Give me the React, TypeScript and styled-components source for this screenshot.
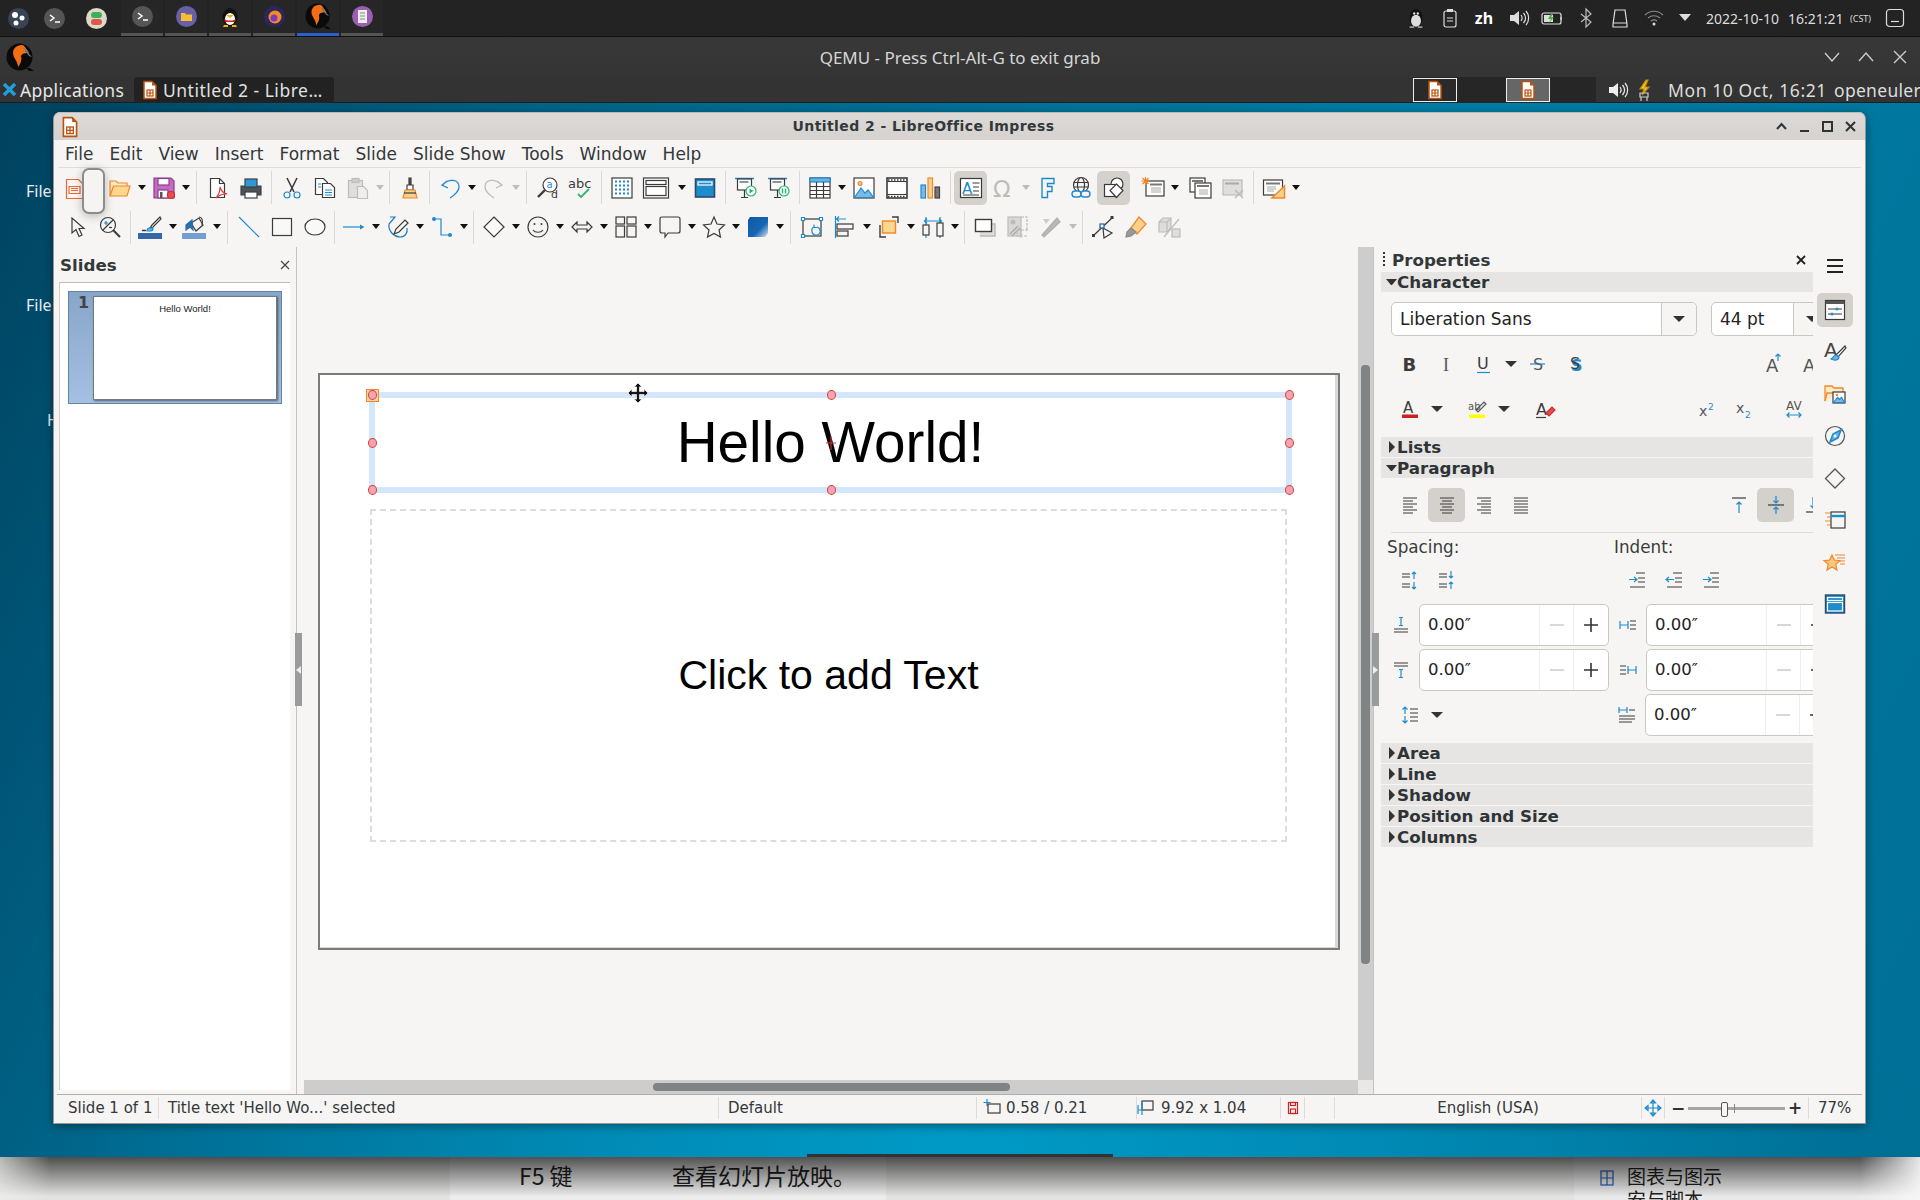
import React from 'react'
import styled, { createGlobalStyle } from 'styled-components'

const GlobalStyle = createGlobalStyle`
  html, body { margin: 0; padding: 0; background: #222; }
  * { box-sizing: border-box; }
`

const DK = '#3b3b3b'
const BL = '#1e8bcd'
const OR = '#f0882a'
const GR = '#bcbcba'

const Screen = styled.div`
  position: relative;
  width: 1920px;
  height: 1200px;
  overflow: hidden;
  display: flex;
  flex-direction: column;
  font-family: 'DejaVu Sans', sans-serif;
  color: #2e3436;
`

/* ---------- host top bar ---------- */
const HostBar = styled.div`
  height: 37px;
  flex: none;
  display: flex;
  align-items: flex-start;
  background: #232323;
  border-bottom: 1px solid #111;
  color: #ddd;
  font-family: 'Noto Sans', sans-serif;
  font-size: 14px;
`
const Launcher = styled.div<{ $w: number }>`
  width: ${(p) => p.$w}px;
  height: 36px;
  flex: none;
  display: flex;
  align-items: center;
  justify-content: center;
`
const Task = styled.div<{ $on?: boolean }>`
  width: 42px;
  height: 36px;
  flex: none;
  margin-right: 2px;
  display: flex;
  align-items: center;
  justify-content: center;
  padding-bottom: 1px;
  background: #262626;
  border-bottom: 3px solid ${(p) => (p.$on ? '#2a5fd0' : '#555')};
`
const HostTray = styled.div`
  margin-left: auto;
  height: 36px;
  display: flex;
  align-items: center;
`
const TraySlot = styled.div<{ $w: number }>`
  width: ${(p) => p.$w}px;
  display: flex;
  justify-content: center;
  font-weight: 700;
  font-size: 16px;
  color: #fff;
`
const HostDate = styled.span`
  margin-left: 7px;
  width: 82px;
`
const HostTime = styled.span`
  width: 62px;
`
const HostZone = styled.span`
  font-size: 9px;
  width: 33px;
`

/* ---------- qemu chrome ---------- */
const Qemu = styled.div`
  height: 66px;
  flex: none;
  background: #333;
  border-radius: 4px 4px 0 0;
  border-bottom: 1px solid #1c1c1c;
  color: #ddd;
  font-family: 'Noto Sans', sans-serif;
  display: flex;
  flex-direction: column;
`
const QemuTitleRow = styled.div`
  height: 40px;
  flex: none;
  display: flex;
  align-items: center;
  position: relative;
  padding-left: 6px;
  background: linear-gradient(#383838, #343434);
`
const QemuTitle = styled.div`
  position: absolute;
  left: 0;
  right: 0;
  text-align: center;
  font-size: 17px;
  color: #d6d6d6;
`
const QemuControls = styled.div`
  margin-left: auto;
  display: flex;
  gap: 14px;
  padding-right: 10px;
`
const PanelRow = styled.div`
  height: 25px;
  flex: none;
  display: flex;
  align-items: center;
  font-size: 17.5px;
`
const PanelApps = styled.div`
  width: 134px;
  flex: none;
  height: 25px;
  display: flex;
  align-items: center;
  gap: 3px;
  padding-left: 2px;
  color: #e6e6e6;
  white-space: nowrap;
  letter-spacing: 0.3px;
`
const PanelTask = styled.div`
  width: 200px;
  height: 26px;
  flex: none;
  margin-top: 1px;
  background: #222;
  border-radius: 4px;
  display: flex;
  align-items: center;
  gap: 3px;
  padding-left: 6px;
  color: #e0e0e0;
  letter-spacing: 0.5px;
  white-space: nowrap;
`
const Pager = styled.div`
  margin-left: auto;
  width: 183px;
  height: 26px;
  margin-right: 10px;
  margin-top: 1px;
  background: #262626;
  display: flex;
  gap: 49px;
  align-items: center;
`
const PagerCell = styled.div<{ $on?: boolean }>`
  width: 44px;
  height: 24px;
  border: 1px solid #eee;
  background: ${(p) => (p.$on ? '#666' : '#2a2a2a')};
  display: flex;
  align-items: center;
  justify-content: center;
`
const PanelClock = styled.span`
  margin-left: 13px;
  width: 166px;
  white-space: nowrap;
  letter-spacing: 0.6px;
`
const PanelUser = styled.span`
  width: 86px;
  white-space: nowrap;
  overflow: hidden;
  letter-spacing: 0.3px;
`

/* ---------- desktop ---------- */
const Desktop = styled.div`
  height: 1054px;
  flex: none;
  position: relative;
  padding: 9px 0 0 53px;
  background: radial-gradient(ellipse 900px 500px at 50% 100%, #0099c6 0%, rgba(0, 153, 198, 0) 100%),
    linear-gradient(115deg, #00425f 0%, #00678c 25%, #007ea6 60%, #006f96 100%);
`
const DesktopLabel = styled.div<{ $top: number; $left: number }>`
  position: absolute;
  left: ${(p) => p.$left}px;
  top: ${(p) => p.$top}px;
  color: #e8eef2;
  font-family: 'Noto Sans', sans-serif;
  font-size: 16px;
`
const Window = styled.div`
  position: relative;
  width: 1813px;
  height: 1012px;
  display: flex;
  flex-direction: column;
  background: #f6f5f3;
  border-radius: 7px 7px 0 0;
  box-shadow: 0 2px 10px rgba(0, 0, 0, 0.4);
  border: 1px solid #9a9896;
  border-top: 0;
`
const TitleBar = styled.div`
  height: 28px;
  flex: none;
  display: flex;
  align-items: center;
  position: relative;
  padding-left: 5px;
  border-radius: 7px 7px 0 0;
  background: linear-gradient(#dcd9d6, #d5d2cf);
  border-top: 1px solid #bbb;
`
const TitleText = styled.div`
  position: absolute;
  left: 0;
  right: 0;
  text-align: center;
  padding: 0 72px 2px 0;
  font-size: 14px;
  font-weight: 700;
  color: #33383a;
  letter-spacing: 0.42px;
`
const WinControls = styled.div`
  margin-left: auto;
  display: flex;
  gap: 8px;
  padding-right: 7px;
`
const MenuBar = styled.div`
  height: 28px;
  flex: none;
  display: flex;
  align-items: center;
  gap: 16px;
  padding-left: 7px;
  font-size: 17px;
  color: #33383a;
  border-bottom: 1px solid #dddcda;
  margin: 0 4px;
`
const ToolRow = styled.div<{ $h: number; $left: number }>`
  height: ${(p) => p.$h}px;
  flex: none;
  display: flex;
  align-items: center;
  padding-left: ${(p) => p.$left}px;
`
const ToolBtn = styled.div<{ $on?: boolean; $w?: number }>`
  width: ${(p) => p.$w ?? 33}px;
  height: 34px;
  flex: none;
  display: flex;
  align-items: center;
  justify-content: center;
  border-radius: 5px;
  background: ${(p) => (p.$on ? '#d4d0cc' : 'transparent')};
`
const Caret = styled.div<{ $off?: boolean }>`
  width: 11px;
  height: 6px;
  flex: none;
  display: flex;
  justify-content: center;
  &::after {
    content: '';
    border-left: 4px solid transparent;
    border-right: 4px solid transparent;
    border-top: 5px solid ${(p) => (p.$off ? '#bdbdbb' : '#111')};
  }
`
const Sep = styled.div<{ $w: number }>`
  width: ${(p) => p.$w}px;
  height: 33px;
  flex: none;
  display: flex;
  justify-content: center;
  &::after {
    content: '';
    width: 1px;
    background: #dad9d7;
  }
`
const Gap = styled.div<{ $w?: number; $h?: number }>`
  width: ${(p) => p.$w ?? 0}px;
  height: ${(p) => (p.$h ? `${p.$h}px` : 'auto')};
  flex: none;
`
const Popover = styled.div`
  position: absolute;
  left: 28px;
  top: 56px;
  width: 23px;
  height: 46px;
  background: #f5f4f2;
  border: 2px solid #8c8c8c;
  border-radius: 7px;
  box-shadow: 0 2px 10px rgba(0, 0, 0, 0.25);
`

/* ---------- main area ---------- */
const Main = styled.div`
  height: 847px;
  flex: none;
  display: flex;
`
const SlidesPane = styled.div`
  width: 243px;
  flex: none;
  display: flex;
  flex-direction: column;
  border-right: 1px solid #c4c3c1;
`
const PaneHead = styled.div`
  height: 35px;
  flex: none;
  display: flex;
  align-items: center;
  justify-content: space-between;
  padding: 0 4px 0 6px;
  font-size: 16.7px;
  font-weight: 700;
  color: #33383a;
`
const SlideList = styled.div`
  flex: 1;
  margin: 0 6px 4px 5px;
  padding: 8px 8px;
  background: #fff;
  border-top: 1px solid #bbb;
  border-left: 1px solid #ccc;
`
const Thumb = styled.div`
  width: 214px;
  height: 113px;
  display: flex;
  padding: 4px 4px 4px 24px;
  position: relative;
  border: 1px solid #66839f;
  background: linear-gradient(#87a6c9, #a4c0e2);
`
const ThumbNo = styled.span`
  position: absolute;
  left: 9px;
  top: 1px;
  font-size: 16px;
  font-weight: 700;
  color: #444;
`
const ThumbPage = styled.div`
  width: 185px;
  height: 104px;
  background: #fff;
  border: 1px solid #777;
  box-shadow: 1px 1px 2px rgba(0, 0, 0, 0.5);
  text-align: center;
  font-family: 'Liberation Sans', sans-serif;
  font-size: 9.5px;
  padding-top: 6px;
  color: #222;
`
const Editor = styled.div`
  width: 1076px;
  flex: none;
  display: flex;
  flex-direction: column;
  position: relative;
`
const EditorRow = styled.div`
  flex: 1;
  display: flex;
`
const Workspace = styled.div`
  width: 1061px;
  flex: none;
  padding: 126px 0 0 21px;
`
const Slide = styled.div`
  position: relative;
  width: 1022px;
  height: 577px;
  background: #fff;
  border: 2px solid #7c7c7c;
  box-shadow: inset -3px -1px 0 #d8d8d8;
  font-family: 'Liberation Sans', sans-serif;
  color: #000;
`
const TitleFrame = styled.div`
  position: absolute;
  left: 49px;
  top: 17px;
  width: 923px;
  height: 101px;
  border: 6px solid #d4e6fb;
  display: flex;
  align-items: center;
  justify-content: center;
  font-size: 56.7px;
`
const Outline = styled.div`
  position: absolute;
  left: 50px;
  top: 134px;
  width: 917px;
  height: 333px;
  border: 2px dashed #dcdcdc;
  display: flex;
  align-items: center;
  justify-content: center;
  font-size: 41px;
`
const Handle = styled.div<{ $x: number; $y: number }>`
  position: absolute;
  left: ${(p) => p.$x - 4.5}px;
  top: ${(p) => p.$y - 5}px;
  width: 9px;
  height: 10px;
  border-radius: 50%;
  background: #f0a6b0;
  border: 1px solid #e03b3b;
`
const CornerMark = styled.div`
  position: absolute;
  left: 46px;
  top: 14px;
  width: 13px;
  height: 13px;
  background: #fbd5a5;
  border: 1px solid ${OR};
`
const Overlay = styled.svg<{ $x: number; $y: number }>`
  position: absolute;
  left: ${(p) => p.$x}px;
  top: ${(p) => p.$y}px;
`
const VScroll = styled.div`
  width: 15px;
  flex: none;
  background: #cdcdcd;
  padding: 118px 3px 0;
`
const VThumb = styled.div`
  height: 599px;
  border-radius: 4px;
  background: #7f8383;
`
const HScrollRow = styled.div`
  height: 14px;
  flex: none;
  display: flex;
  padding-left: 7px;
`
const HTrack = styled.div`
  width: 1054px;
  flex: none;
  background: #cdcdcd;
  padding: 3px 0 0 349px;
`
const HThumb = styled.div`
  width: 357px;
  height: 8px;
  border-radius: 4px;
  background: #7f8383;
`
const HCorner = styled.div`
  flex: 1;
  background: #e9e8e6;
`
const Grip = styled.div<{ $x: number; $left?: boolean }>`
  position: absolute;
  left: ${(p) => p.$x}px;
  top: 386px;
  width: 7px;
  height: 73px;
  background: #9a9c9c;
  display: flex;
  align-items: center;
  justify-content: center;
  &::after {
    content: '';
    border-top: 4px solid transparent;
    border-bottom: 4px solid transparent;
    ${(p) => (p.$left ? 'border-right: 5px solid #eee;' : 'border-left: 5px solid #eee;')}
  }
`

/* ---------- right deck ---------- */
const Deck = styled.div`
  flex: 1;
  display: flex;
  border-left: 1px solid #c4c3c1;
`
const Panel = styled.div`
  width: 439px;
  flex: none;
  overflow: hidden;
  padding-left: 7px;
`
const PanelHead = styled.div`
  height: 25px;
  display: flex;
  align-items: center;
  gap: 5px;
  font-size: 16.7px;
  font-weight: 700;
  color: #33383a;
`
const PanelClose = styled.span`
  margin-left: auto;
  margin-right: 5px;
  display: flex;
`
const SectionHead = styled.div`
  height: 20px;
  margin-bottom: 1px;
  background: #e6e5e3;
  display: flex;
  align-items: center;
  padding-left: 5px;
  font-size: 16.7px;
  font-weight: 700;
  color: #2e3436;
  white-space: nowrap;
`
const ArrowDown = styled.i`
  width: 11px;
  border-left: 5.5px solid transparent;
  border-right: 5.5px solid transparent;
  border-top: 6px solid #2e3436;
`
const ArrowRight = styled.i`
  margin-left: 3px;
  margin-right: 2px;
  width: 6px;
  border-top: 6px solid transparent;
  border-bottom: 6px solid transparent;
  border-left: 6px solid #2e3436;
`
const Combo = styled.div<{ $w: number; $btn: number }>`
  width: ${(p) => p.$w}px;
  height: 34px;
  flex: none;
  display: flex;
  background: #fff;
  border: 1px solid #cbc7c2;
  border-radius: 5px;
  font-size: 17px;
  color: #222;
  & > span {
    flex: 1;
    padding-left: 8px;
    line-height: 32px;
  }
  & > b {
    width: ${(p) => p.$btn}px;
    display: flex;
    align-items: center;
    justify-content: center;
    background: #f6f5f3;
    border-left: 1px solid #cbc7c2;
    border-radius: 0 5px 5px 0;
  }
`
const ComboRow = styled.div`
  margin: 10px 0 0 10px;
  display: flex;
  gap: 14px;
  width: 500px;
`
const PRow = styled.div<{ $h?: number; $top?: number; $bottom?: number; $left?: number }>`
  display: flex;
  align-items: center;
  height: ${(p) => p.$h ?? 36}px;
  margin-top: ${(p) => p.$top ?? 0}px;
  margin-bottom: ${(p) => p.$bottom ?? 0}px;
  padding-left: ${(p) => p.$left ?? 10}px;
  width: 600px;
`
const PBtn = styled.div<{ $on?: boolean; $w?: number }>`
  width: ${(p) => p.$w ?? 37}px;
  height: 34px;
  flex: none;
  display: flex;
  align-items: center;
  justify-content: center;
  border-radius: 5px;
  background: ${(p) => (p.$on ? '#d4d0cc' : 'transparent')};
`
const PCaret = styled.div`
  width: 18px;
  flex: none;
  display: flex;
  justify-content: center;
  &::after {
    content: '';
    border-left: 6px solid transparent;
    border-right: 6px solid transparent;
    border-top: 6px solid #333;
  }
`
const Divider = styled.div`
  height: 1px;
  margin: 10px 0 0 10px;
  background: #dcdbd9;
`
const LabelRow = styled.div`
  height: 28px;
  display: flex;
  align-items: center;
  font-size: 16.8px;
  color: #3a3d3e;
`
const FieldLabel = styled.span<{ $w: number; $left: number }>`
  width: ${(p) => p.$w}px;
  padding-left: ${(p) => p.$left}px;
`
const Spin = styled.div`
  width: 190px;
  height: 42px;
  flex: none;
  display: flex;
  background: #fff;
  border: 1px solid #cbc7c2;
  border-radius: 5px;
  font-size: 16.5px;
  color: #222;
`
const SpinValue = styled.div`
  width: 119px;
  padding-left: 8px;
  line-height: 40px;
`
const SpinBtn = styled.div<{ $w: number; $off?: boolean }>`
  width: ${(p) => p.$w}px;
  border-left: 1px solid #eee;
  display: flex;
  align-items: center;
  justify-content: center;
  color: ${(p) => (p.$off ? '#d8d8d6' : '#333')};
`
const SpinGrid = styled.div`
  margin-top: 7px;
  display: flex;
  flex-direction: column;
  gap: 3px;
  width: 600px;
  margin-bottom: 7px;
`
const TabBar = styled.div`
  flex: 1;
  display: flex;
  flex-direction: column;
  align-items: center;
  padding: 8px 8px 0 0;
`
const Tab = styled.div<{ $on?: boolean }>`
  width: 36px;
  height: 34px;
  margin-bottom: 8px;
  display: flex;
  align-items: center;
  justify-content: center;
  border-radius: 5px;
  background: ${(p) => (p.$on ? '#d4d0cc' : 'transparent')};
`

/* ---------- status bar ---------- */
const StatusBar = styled.div`
  height: 30px;
  flex: none;
  margin: 0 3px;
  padding-bottom: 3px;
  display: flex;
  align-items: center;
  font-size: 15px;
  color: #33383a;
  border-top: 1px solid #b0afad;
`
const Cell = styled.div<{ $w: number; $center?: boolean; $pad?: number; $last?: boolean }>`
  width: ${(p) => p.$w}px;
  height: 22px;
  flex: none;
  display: flex;
  align-items: center;
  gap: 4px;
  white-space: nowrap;
  justify-content: ${(p) => (p.$center ? 'center' : 'flex-start')};
  padding-left: ${(p) => p.$pad ?? 0}px;
  border-right: ${(p) => (p.$last ? '0' : '1px solid #dddcda')};
`
const Zoomer = styled.div`
  width: 144px;
  height: 22px;
  flex: none;
  display: flex;
  align-items: center;
  padding: 0 6px;
  gap: 3px;
  border-right: 1px solid #dddcda;
`
const ZoomSign = styled.span`
  width: 14px;
  font-size: 17px;
  font-weight: 700;
  text-align: center;
  color: #333;
`
const ZoomTrack = styled.div`
  flex: 1;
  height: 3px;
  background: #a5a5a5;
  position: relative;
  &::before {
    content: '';
    position: absolute;
    left: 33px;
    top: -5px;
    width: 5px;
    height: 13px;
    background: #f6f5f3;
    border: 1px solid #555;
    border-radius: 2px;
  }
  &::after {
    content: '';
    position: absolute;
    left: 46px;
    top: -3px;
    width: 1px;
    height: 9px;
    background: #888;
  }
`

/* ---------- what lies behind the vm window ---------- */
const Behind = styled.div`
  height: 43px;
  flex: none;
  position: relative;
  display: flex;
  background: #f1f1f0;
  font-family: 'Noto Sans CJK SC', sans-serif;
  color: #222;
  font-size: 23px;
  &::after {
    content: '';
    position: absolute;
    inset: 0;
    background: linear-gradient(rgba(0, 0, 0, 0.68), rgba(0, 0, 0, 0.06) 92%);
    mask-image: linear-gradient(90deg, rgba(0, 0, 0, 0.35) 0, #000 50px, #000 1860px, rgba(0, 0, 0, 0.1) 1920px);
    pointer-events: none;
  }
`
const BehindDoc = styled.div`
  margin-left: 450px;
  width: 436px;
  flex: none;
  padding: 3px 0 0 69px;
  display: flex;
  background: #fbfbfb;
  line-height: 30px;
`
const BehindKey = styled.span`
  width: 153px;
  flex: none;
`
const BehindNav = styled.div`
  margin-left: 688px;
  flex: 1;
  padding: 7px 0 0 25px;
  background: #f8f8f8;
  font-size: 19px;
  line-height: 23px;
  display: flex;
  gap: 12px;
`
const NavIcon = styled.div`
  padding-top: 5px;
`
const NavLine = styled.div`
  display: flex;
  flex-direction: column;
`
const WindowEdge = styled.div`
  position: absolute;
  left: 807px;
  top: 1154px;
  width: 306px;
  height: 3px;
  background: #333;
`

/* ---------- drawings ---------- */
const Ico = styled.svg`
  fill: none;
  stroke-width: 1.2;
  flex: none;
  display: block;
  overflow: visible;
`
const SvgText = styled.text<{ $size: number; $weight?: number; $font?: string }>`
  font-family: ${(p) => p.$font ?? "'DejaVu Sans'"}, sans-serif;
  font-size: ${(p) => p.$size}px;
  font-weight: ${(p) => p.$weight ?? 400};
  stroke: none;
`

const I = ({ s = 22, v = 22, children }: { s?: number; v?: number; children: React.ReactNode }) => (
  <Ico width={s} height={s} viewBox={`0 0 ${v} ${v}`}>
    {children}
  </Ico>
)

const lines = (x1: number, x2: number, ys: number[], c: string) => (
  <path d={ys.map((y) => `M${x1} ${y}H${x2}`).join('')} stroke={c} />
)

const icons: Record<string, React.ReactNode> = {
  newdoc: (
    <>
      <path d="M1.5 2.5h12l5 5v14h-17z" fill="#fff6f0" stroke="#e9683c" />
      <path d="M4 9.5h11v7H4z" stroke="#e9683c" />
      <path d="M6 11.5h7M6 13.5h7" stroke="#e9683c" />
    </>
  ),
  open: (
    <>
      <path d="M1 18V4h6l2 2h9v3" fill="#fdeac4" stroke={OR} />
      <path d="M4.5 9H21l-3 10H1z" fill="#fbd88c" stroke={OR} />
    </>
  ),
  save: (
    <>
      <path d="M1 1h17l3 3v17H1z" fill="#c46cc0" stroke="#8b3b92" />
      <rect x="5" y="1.5" width="11" height="6.5" fill="#fff" stroke="#8b3b92" />
      <rect x="5" y="13" width="10" height="8" fill="#fff" stroke="#8b3b92" />
      <rect x="7" y="15" width="2.5" height="6" fill="#555" stroke="none" />
      <circle cx="18" cy="18" r="3.5" fill="#ee4a50" stroke="#c93030" />
    </>
  ),
  pdf: (
    <>
      <path d="M3.5 1.5h9l5 5v14h-14z" fill="#fff" stroke={DK} />
      <path d="M12.5 1.5v5h5" stroke={DK} />
      <path d="M9 21c3-3 4-7 4-11 1 4 3 6 7 7-4 0-8 1-11 4z" stroke="#e0393b" fill="#fff" />
    </>
  ),
  print: (
    <>
      <path d="M1 9h20v9H1z" fill="#4c5256" stroke="#3d4145" />
      <rect x="5" y="2" width="12" height="8" fill="#2d9ad8" stroke="#3d4145" />
      <rect x="5" y="15" width="12" height="6" fill="#fff" stroke="#3d4145" />
    </>
  ),
  cut: (
    <>
      <path d="M6 1l7 14M16 1L9 15" stroke={DK} strokeWidth="1.6" />
      <circle cx="6" cy="18" r="3" stroke={BL} />
      <circle cx="16" cy="18" r="3" stroke={BL} />
    </>
  ),
  copy: (
    <>
      <path d="M1.5 1.5h8l4 4v12h-12z" fill="#fff" stroke={DK} />
      <path d="M8.5 6.5h8l4 4v10h-12z" fill="#fff" stroke={DK} />
      <path d="M11 13h7M11 15.5h7M11 18h7" stroke={BL} />
      <path d="M4 7h3M4 10h3" stroke={BL} />
    </>
  ),
  paste: (
    <>
      <rect x="1.5" y="3.5" width="14" height="17" fill="#dedede" stroke={GR} />
      <rect x="5" y="1.5" width="7" height="4" fill="#ccc" stroke={GR} />
      <path d="M10.5 9.5h6l4 4v8h-10z" fill="#eee" stroke={GR} />
    </>
  ),
  clone: (
    <>
      <path d="M10 1h2v7h-2z" fill="#555" stroke={DK} />
      <path d="M8 8h6v5H8z" fill="#fff" stroke={DK} />
      <path d="M6 13h10l2 8H4z" fill="#fbd08c" stroke={OR} />
      <path d="M5 16h12" stroke={DK} />
    </>
  ),
  undo: <path d="M8 4L3 8l6 3M3.5 8C10 1 20 2 20 10c0 5-6 9-9 11" stroke={BL} strokeWidth="1.3" />,
  redo: <path d="M14 4l5 4-6 3M18.5 8C12 1 2 2 2 10c0 5 6 9 9 11" stroke={GR} strokeWidth="1.3" />,
  find: (
    <>
      <circle cx="13" cy="8" r="7" fill="#fff" stroke={DK} />
      <path d="M8 13l-7 7" stroke={DK} strokeWidth="2.4" />
      <SvgText x="9.5" y="11" fill={BL} $size={10}>
        a
      </SvgText>
      <SvgText x="14" y="21" fill={DK} $size={11}>
        d
      </SvgText>
    </>
  ),
  spell: (
    <>
      <SvgText x="-2" y="11" fill={DK} $size={13}>
        abc
      </SvgText>
      <path d="M8 17l3 3 8-8" stroke="#2bb673" strokeWidth="1.8" />
    </>
  ),
  grid: (
    <>
      <rect x="1" y="1" width="20" height="20" fill="#fff" stroke={DK} />
      <path d="M4 4.5h15M4 8.5h15M4 12.5h15M4 16.5h15" stroke={BL} strokeWidth="1.8" strokeDasharray="2 2" />
    </>
  ),
  layout: (
    <>
      <rect x="-1.5" y="1" width="25" height="20" fill="#fff" stroke={DK} />
      <rect x="1" y="3.5" width="20" height="4" stroke={DK} />
      <rect x="1" y="9.5" width="20" height="9" stroke={DK} />
    </>
  ),
  master: (
    <>
      <rect x="1.5" y="2" width="19" height="18" fill={BL} stroke="#2a4a6a" strokeWidth="1.6" />
      <rect x="4" y="5" width="14" height="3" stroke="#fff" />
    </>
  ),
  start: (
    <>
      <path d="M0 1.5h19" stroke={BL} strokeWidth="1.5" />
      <rect x="2.5" y="2" width="14" height="11" fill="#fff" stroke={DK} />
      <path d="M4.5 5h9" stroke="#777" strokeWidth="1.6" />
      <path d="M9.5 13v7M6 20.5h7" stroke={DK} />
      <circle cx="16" cy="14" r="5" fill="#fff" stroke="#2bb673" />
      <path d="M14.5 11.5l4 2.5-4 2.5z" fill="#2bb673" stroke="none" />
    </>
  ),
  current: (
    <>
      <path d="M0 1.5h19" stroke={BL} strokeWidth="1.5" />
      <rect x="2.5" y="2" width="14" height="11" fill="#fff" stroke={DK} />
      <path d="M4.5 5h9" stroke="#777" strokeWidth="1.6" />
      <path d="M9.5 13v7M6 20.5h7" stroke={DK} />
      <circle cx="16" cy="14" r="5" fill="#fff" stroke="#2bb673" />
      <path d="M14.5 11.5v5M17.5 11.5v5" stroke="#2bb673" strokeWidth="1.5" />
    </>
  ),
  table: (
    <>
      <rect x="1" y="1" width="20" height="20" fill="#fff" stroke={DK} />
      <rect x="1" y="1" width="20" height="4" fill="#6db3e2" stroke={BL} />
      <path d="M1 9.5h20M1 13.5h20M1 17.5h20M7.5 5v16M14.5 5v16" stroke={DK} />
    </>
  ),
  image: (
    <>
      <rect x="1" y="1" width="20" height="20" fill="#fff" stroke={DK} />
      <circle cx="7" cy="6.5" r="2" fill="#fbc07a" stroke={OR} />
      <path d="M1.5 20.5L8 11l4 5 3-3 5.5 7.5z" fill="#7eb8e5" stroke={BL} />
    </>
  ),
  video: (
    <>
      <rect x="1" y="1" width="20" height="20" fill="#fff" stroke={DK} strokeWidth="1.6" />
      <path d="M1 4.5h20M1 17.5h20" stroke={DK} />
      <path d="M2 3h18M2 19.5h18" stroke={DK} strokeWidth="1.6" strokeDasharray="1.5 1.5" />
    </>
  ),
  chart: (
    <>
      <rect x="2" y="8" width="4.5" height="13" fill="#7eb8e5" stroke={BL} />
      <rect x="9" y="1" width="4.5" height="20" fill="#fbd08c" stroke={OR} />
      <rect x="16" y="10" width="4.5" height="11" fill="#777" stroke="#444" />
    </>
  ),
  textbox: (
    <>
      <rect x="0.5" y="1.5" width="21" height="19" fill="#fff" stroke={DK} />
      <SvgText x="2" y="17" fill={BL} $size={15}>
        A
      </SvgText>
      <path d="M12.5 6h7M13 10h6M13 14h6M3 18h16" stroke={DK} />
    </>
  ),
  omega: (
    <SvgText x="0" y="20" fill={GR} $size={23}>
      Ω
    </SvgText>
  ),
  fontwork: <path d="M5 1.5h12v5H10.5v3H15v5h-4.500v6H5z" stroke={BL} strokeWidth="1.4" />,
  link: (
    <>
      <circle cx="11" cy="8" r="7.500" stroke={DK} />
      <ellipse cx="11" cy="8" rx="3.500" ry="7.500" stroke={DK} />
      <path d="M3.500 5.500h15M3.500 10h15" stroke={DK} />
      <rect x="2" y="14" width="9" height="6" rx="3" fill="#f6f5f3" stroke={BL} strokeWidth="1.4" />
      <rect x="11" y="14" width="9" height="6" rx="3" fill="#f6f5f3" stroke={BL} strokeWidth="1.4" />
    </>
  ),
  shapes: (
    <>
      <circle cx="14" cy="7" r="6" fill="#fff" stroke={DK} />
      <rect x="1.5" y="7.5" width="12" height="12" fill="#fff" stroke={DK} />
      <path d="M13.500 7l6.500 6.500-6.500 7-6.500-7z" fill="#fff" stroke={DK} />
    </>
  ),
  newslide: (
    <>
      <rect x="4" y="4" width="18" height="15" fill="#fff" stroke={DK} />
      <path d="M8 7.500h12" stroke="#777" strokeWidth="2" />
      <path d="M9 11h10M9 13h10M9 15h10" stroke="#aaa" />
      <path d="M3.500 0v8M-.5 4h8M.5 1l6 6M6.500 1l-6 6" stroke={OR} />
    </>
  ),
  dup: (
    <>
      <rect x="1" y="1" width="15" height="14" fill="#fff" stroke={DK} />
      <path d="M3 4h11" stroke="#777" strokeWidth="2" />
      <rect x="6" y="6" width="16" height="15" fill="#fff" stroke={DK} />
      <path d="M8 9h12" stroke="#777" strokeWidth="2" />
      <path d="M10 13h9M10 15h9M10 17h9" stroke="#aaa" />
    </>
  ),
  del: (
    <>
      <rect x="1" y="3" width="19" height="15" fill="#dedede" stroke={GR} />
      <path d="M3 6.500h14" stroke="#aaa" strokeWidth="2" />
      <path d="M13 13l8 8M21 13l-8 8" stroke={GR} strokeWidth="1.500" />
    </>
  ),
  slideprop: (
    <>
      <rect x="0.5" y="3" width="19" height="15" fill="#fff" stroke={DK} />
      <path d="M3 6.500h14" stroke="#777" strokeWidth="2" />
      <path d="M4 10h9M4 12h9M4 14h7" stroke="#aaa" />
      <path d="M21.500 9v12H9z" fill="#fbd08c" stroke={OR} strokeWidth="1.500" />
    </>
  ),
  select: <path d="M6 2v15l4-3.500 3 7 3-1.500-3-6.500h5z" fill="#f6f5f3" stroke={DK} />,
  zoom: (
    <>
      <circle cx="9" cy="9" r="7.500" stroke={DK} />
      <path d="M3.500 14.500L14.500 3.500" stroke={DK} />
      <path d="M5 7h4M7 5v4" stroke={BL} />
      <path d="M10 11.500h3" stroke={DK} />
      <path d="M14 14l7 7" stroke={DK} strokeWidth="2" />
    </>
  ),
  linecolor: (
    <>
      <path d="M20 1l-8 8-2 3 3-1 8-8z" fill="#fff" stroke={DK} />
      <path d="M10 12c-2 0-3 1-3 3h4c1 0 2-1 2-3z" fill="#6db3e2" stroke={BL} />
      <path d="M2 14.500h4" stroke={DK} strokeWidth="1.500" />
      <rect x="-2" y="17" width="24" height="6" fill="#3566a5" stroke="none" />
    </>
  ),
  fillcolor: (
    <>
      <path d="M7 7l8-5 4 7-7 6z" fill="#f6f5f3" stroke={DK} />
      <path d="M2 9l6-5 1 10-3-3-4 3z" fill="#2a6ea8" stroke="#2a6ea8" />
      <path d="M15 1c3 0 4 3 3 8" stroke={DK} />
      <rect x="-2" y="17" width="24" height="6" fill="#729fcf" stroke="none" />
    </>
  ),
  line: <path d="M1 1l20 20" stroke={BL} />,
  rect: <rect x="1.500" y="2.500" width="19" height="17" stroke={DK} fill="#f9f9f8" />,
  ellipse: <ellipse cx="11" cy="11" rx="10" ry="8" stroke={DK} fill="#f9f9f8" />,
  arrow: (
    <>
      <path d="M0 11h19" stroke={BL} />
      <path d="M17 8.500l4.500 2.500-4.500 2.500z" fill={BL} stroke="none" />
    </>
  ),
  curve: (
    <>
      <path d="M3 1h5l-6 7c-1 8 6 13 11 13s8-4 7-9" stroke="#1a7cc0" />
      <path d="M7 18l2-5 9-9 3 3-9 9z" fill="#f6f5f3" stroke={DK} />
    </>
  ),
  connector: (
    <>
      <path d="M3 3h7v16h9" stroke={BL} />
      <circle cx="3" cy="3" r="2" fill={BL} stroke="none" />
      <circle cx="19" cy="19" r="2" fill={BL} stroke="none" />
    </>
  ),
  diamond: <path d="M11 1l10 10-10 10L1 11z" stroke={DK} fill="#f9f9f8" />,
  smile: (
    <>
      <circle cx="11" cy="11" r="10" stroke={DK} />
      <circle cx="7.500" cy="8" r="1" fill={DK} stroke="none" />
      <circle cx="14.500" cy="8" r="1" fill={DK} stroke="none" />
      <path d="M6 14c2 3 8 3 10 0" stroke={DK} />
    </>
  ),
  lr: <path d="M1 11l5-5v3h10V6l5 5-5 5v-3H6v3z" stroke={DK} />,
  flow: (
    <>
      <rect x="1" y="1" width="8.500" height="7" stroke={DK} />
      <rect x="12" y="1" width="9" height="7" stroke={DK} />
      <rect x="1" y="10" width="8.500" height="11" stroke={DK} />
      <rect x="12" y="10" width="9" height="11" stroke={DK} />
    </>
  ),
  callout: <path d="M3 1h16q2 0 2 2v12q0 2-2 2H9l-3 4v-4H3q-2 0-2-2V3q0-2 2-2z" stroke={DK} />,
  star: <path d="M11 1l3 7 7.500 1-5.500 5 1.500 7L11 17.500 4.500 21 6 14 .5 9 8 8z" stroke={DK} />,
  cube: (
    <>
      <defs>
        <linearGradient id="cubeFill" x1="0" y1="0" x2="1" y2="1">
          <stop offset="0" stopColor="#0f57a8" />
          <stop offset="0.6" stopColor="#1766b4" />
          <stop offset="1" stopColor="#d5e6f6" />
        </linearGradient>
      </defs>
      <path d="M3 1h18v16l-3 4H1V4z" fill="url(#cubeFill)" stroke="none" />
    </>
  ),
  rotate: (
    <>
      <rect x="2" y="3" width="18" height="17" stroke={DK} />
      <path d="M0.500 1.500h3v3h-3zM18.500 1.500h3v3h-3zM0.500 18.500h3v3h-3z" fill="#fff" stroke={BL} />
      <path d="M13 11c-3 1-3 7 1 8s7-3 4-7l-2-1M13 8.500v3h3" stroke={BL} fill="#f6f5f3" />
    </>
  ),
  align: (
    <>
      <path d="M1.500 0v22" stroke={BL} />
      <path d="M5 .5L2.500 3 5 5.500M3 3h9" stroke={BL} />
      <rect x="3" y="8" width="16" height="5" stroke={DK} />
      <rect x="3" y="15" width="11" height="5" stroke={DK} />
    </>
  ),
  arrange: (
    <>
      <path d="M14 1h6v6M2 9v12h6" stroke={DK} strokeWidth="1.400" />
      <rect x="4.500" y="5" width="13" height="12" fill="#fbd890" stroke={OR} strokeWidth="1.400" />
    </>
  ),
  distribute: (
    <>
      <path d="M3 5h16M5 2.500L2.500 5 5 7.500M17 2.500L19.500 5 17 7.500" stroke={BL} />
      <path d="M4 1v21M18 1v21" stroke={BL} />
      <rect x="1" y="9" width="6" height="10" fill="#f6f5f3" stroke={DK} />
      <rect x="15" y="7" width="6" height="13" fill="#f6f5f3" stroke={DK} />
    </>
  ),
  shadow: (
    <>
      <path d="M5 8h16v12H6" fill="#ddd" stroke="#bbb" strokeWidth="1.500" />
      <rect x="1.500" y="3.500" width="16" height="12" fill="#fff" stroke={DK} strokeWidth="1.400" />
    </>
  ),
  crop: (
    <>
      <rect x="1" y="1" width="13" height="19" fill="#d8d8d8" stroke={GR} />
      <path d="M3 18l8-8M5 20l8-8" stroke="#aaa" strokeWidth="1.500" />
      <circle cx="6" cy="6" r="2.500" fill="#bbb" stroke="none" />
      <path d="M14 1h6v14M20 20H10v-6h12M14 13v9" stroke={GR} strokeDasharray="3 1" />
    </>
  ),
  filter: (
    <>
      <path d="M2 19l2 2 16-15-3-4z" fill="#b8b8b8" stroke="#b0b0b0" />
      <path d="M3 3h7L6 8z" fill="#ccc" stroke="none" />
    </>
  ),
  points: (
    <>
      <path d="M1 20L20 2" stroke={DK} />
      <rect x="0" y="18" width="3" height="3" fill={DK} stroke="none" />
      <rect x="18.500" y="0" width="3" height="3" fill={DK} stroke="none" />
      <path d="M11 12l9 5-8 5z" fill="#f6f5f3" stroke={DK} />
      <rect x="8" y="8" width="4" height="4" fill="#fff" stroke="#1a5fa8" />
    </>
  ),
  glue: (
    <>
      <path d="M14 1l7 7-9 10-6-6z" fill="#fbd08c" stroke={OR} strokeWidth="1.300" />
      <path d="M6 12l-4 4-1 5 5-1 5-4z" fill="#999" stroke="#888" />
    </>
  ),
  extrude: (
    <>
      <path d="M1 6l4-4h8v10l-4 4H1z" fill="#ddd" stroke={GR} />
      <path d="M1 6h8v10M9 6l4-4" stroke={GR} />
      <path d="M6 21L21 3" stroke={GR} />
      <rect x="14" y="13" width="8" height="8" fill="#ddd" stroke={GR} />
    </>
  ),
  // panel icons
  bold: (
    <SvgText x="3.500" y="18" fill={DK} $size={18} $weight={700}>
      B
    </SvgText>
  ),
  italic: (
    <SvgText x="7" y="18" fill="#555" $size={18} $font="'Liberation Serif'">
      I
    </SvgText>
  ),
  under: (
    <>
      <SvgText x="4" y="16" fill={DK} $size={16}>
        U
      </SvgText>
      <path d="M4 19.500h13" stroke={BL} />
    </>
  ),
  strike: (
    <>
      <SvgText x="5" y="17" fill="#555" $size={16}>
        S
      </SvgText>
      <path d="M2 11h15" stroke={BL} />
    </>
  ),
  shadowS: (
    <>
      <SvgText x="6" y="18" fill={BL} $size={16} $weight={700}>
        S
      </SvgText>
      <SvgText x="5" y="16" fill={DK} $size={16}>
        S
      </SvgText>
    </>
  ),
  grow: (
    <>
      <SvgText x="2" y="19" fill="#555" $size={18}>
        A
      </SvgText>
      <path d="M14 8V1M11.500 3.500L14 1l2.500 2.500" stroke={BL} />
    </>
  ),
  shrink: (
    <SvgText x="2" y="19" fill="#555" $size={18}>
      A
    </SvgText>
  ),
  fontcolor: (
    <>
      <SvgText x="4" y="15" fill={DK} $size={15}>
        A
      </SvgText>
      <rect x="3" y="16.500" width="16" height="3.500" fill="#c9211e" stroke="none" />
    </>
  ),
  hilite: (
    <>
      <SvgText x="2" y="12" fill="#555" $size={10}>
        ab
      </SvgText>
      <path d="M10 12l8-8 2 2-8 8z" stroke="#555" />
      <rect x="3" y="16.500" width="16" height="3.500" fill="#ffff00" stroke="none" />
    </>
  ),
  clearfmt: (
    <>
      <SvgText x="2" y="17" fill={DK} $size={16}>
        A
      </SvgText>
      <path d="M2 19.500h10" stroke={DK} />
      <path d="M12 15l6-6 3 3-6 6z" fill="#ec4a4a" stroke="#c93030" />
    </>
  ),
  sup: (
    <>
      <SvgText x="3" y="18" fill="#555" $size={14}>
        x
      </SvgText>
      <SvgText x="12" y="12" fill={BL} $size={9}>
        2
      </SvgText>
    </>
  ),
  sub: (
    <>
      <SvgText x="3" y="15" fill="#555" $size={14}>
        x
      </SvgText>
      <SvgText x="12" y="20" fill={BL} $size={9}>
        2
      </SvgText>
    </>
  ),
  kern: (
    <>
      <SvgText x="3" y="12" fill="#555" $size={12}>
        AV
      </SvgText>
      <path d="M4 17h14M6.500 14.500L4 17l2.500 2.500M15.500 14.500L18 17l-2.500 2.500" stroke={BL} />
    </>
  ),
  aleft: <path d="M4 4h14M4 7h10M4 10h14M4 13h10M4 16h14M4 19h10" stroke={DK} />,
  acenter: <path d="M4 4h14M6 7h10M4 10h14M6 13h10M4 16h14M6 19h10" stroke={DK} />,
  aright: <path d="M4 4h14M8 7h10M4 10h14M8 13h10M4 16h14M8 19h10" stroke={DK} />,
  ajust: lines(4, 18, [4, 7, 10, 13, 16, 19], DK),
  vtop: (
    <>
      <path d="M4 4h14" stroke={DK} />
      <path d="M11 19V8M8.500 10.500L11 8l2.500 2.500" stroke={BL} />
    </>
  ),
  vmid: (
    <>
      <path d="M3 11h16" stroke={DK} />
      <path d="M11 2v7M8.500 6.500L11 9l2.500-2.500M11 20v-7M8.500 15.500L11 13l2.500 2.500" stroke={BL} />
    </>
  ),
  vbot: (
    <>
      <path d="M4 18h14" stroke={DK} />
      <path d="M11 3v11M8.500 11.500L11 14l2.500-2.500" stroke={BL} />
    </>
  ),
  incsp: (
    <>
      <path d="M3 5h8M3 8h8M3 15h8M3 18h8" stroke={DK} />
      <path d="M15 10V3M13 5l2-2 2 2M15 13v7M13 18l2 2 2-2" stroke={BL} />
    </>
  ),
  decsp: (
    <>
      <path d="M3 5h8M3 8h8M3 15h8M3 18h8" stroke={DK} />
      <path d="M15 2v7M13 7l2 2 2-2M15 20v-7M13 15l2-2 2 2" stroke={BL} />
    </>
  ),
  indmore: (
    <>
      <path d="M10 4h9M12 9h7M12 13h7M4 18h15" stroke={DK} />
      <path d="M3 10.500h8M8 8l3 2.500L8 13" stroke={BL} />
    </>
  ),
  indless: (
    <>
      <path d="M10 4h9M12 9h7M12 13h7M4 18h15" stroke={DK} />
      <path d="M11 10.500H3M6 8l-3 2.500L6 13" stroke={BL} />
    </>
  ),
  above: (
    <>
      <path d="M11 4v7M9 3.500h4M9 11.500h4" stroke={BL} />
      <path d="M4 15h14M4 18h14" stroke={DK} />
    </>
  ),
  below: (
    <>
      <path d="M4 4h14M4 7h14" stroke={DK} />
      <path d="M11 11v7M9 10.500h4M9 18.500h4" stroke={BL} />
    </>
  ),
  befor: (
    <>
      <path d="M3 7v8M11 7v8M3 11h8" stroke={BL} />
      <path d="M13 7h6M13 11h6M13 15h6" stroke={DK} />
    </>
  ),
  after: (
    <>
      <path d="M11 7v8M19 7v8M11 11h8" stroke={BL} />
      <path d="M3 7h6M3 11h6M3 15h6" stroke={DK} />
    </>
  ),
  first: (
    <>
      <path d="M3 3v6M11 3v6M3 6h8" stroke={BL} />
      <path d="M13 6h6M3 12h16M3 15h16M3 18h13" stroke={DK} />
    </>
  ),
  linesp: (
    <>
      <path d="M6 10V3M3.500 5.500L6 3l2.500 2.500M6 12v7M3.500 16.500L6 19l2.500-2.500" stroke={BL} />
      <path d="M11 5h8M11 9h8M11 13h8M11 17h8" stroke={DK} />
    </>
  ),
  // tab bar
  tabprops: (
    <>
      <rect x="1.500" y="1.500" width="19" height="19" fill="#fff" stroke={DK} />
      <path d="M1.500 3.500h19" stroke="#555" strokeWidth="3" />
      <path d="M4 10h14M4 15h14" stroke={DK} />
      <circle cx="13" cy="10" r="1.500" fill={BL} stroke="none" />
      <circle cx="8" cy="15" r="1.500" fill={BL} stroke="none" />
    </>
  ),
  tabstyles: (
    <>
      <SvgText x="0" y="16" fill="#444" $size={20}>
        A
      </SvgText>
      <path d="M21 5l-9 9 2 2 8-9z" fill="#fff" stroke={DK} />
      <path d="M12 14c-3 1-3 3-5 4 4 2 8 1 8-2z" fill="#6db3e2" stroke={BL} />
    </>
  ),
  tabgallery: (
    <>
      <path d="M1 18V3h7l2 2h9v4" fill="#fdeac4" stroke={OR} strokeWidth="1.300" />
      <path d="M1 18l2-8h18" stroke={OR} strokeWidth="1.300" />
      <rect x="9" y="9" width="12" height="11" fill="#fff" stroke={DK} />
      <path d="M9.500 19.500l4-5 2 2 2-2 3 5z" fill="#7eb8e5" stroke={BL} />
      <circle cx="13" cy="12" r="1.200" fill={OR} stroke="none" />
    </>
  ),
  tabnav: (
    <>
      <circle cx="11" cy="11" r="9.500" stroke="#555" />
      <path d="M17 5l-3 8-8 4 3-8z" fill="#6db3e2" stroke={BL} strokeWidth="1.600" />
      <circle cx="11" cy="11" r="1.400" fill="#fff" stroke="none" />
    </>
  ),
  tabshapes: <path d="M11 2l9.500 9.500L11 21 1.500 11.500z" stroke="#555" strokeWidth="1.300" />,
  tabanim: (
    <>
      <path d="M1 4h5M3 8h3M1 12h5M3 16h3" stroke={OR} />
      <rect x="7" y="3" width="14" height="16" stroke={DK} />
      <path d="M7 7h14" stroke={BL} strokeWidth="2.400" />
    </>
  ),
  tabfave: (
    <>
      <path d="M8 4l2.300 5 5.700.6-4.300 3.700 1.300 5.700L8 16l-5 3 1.300-5.700L0 9.600 5.700 9z" fill="#fbc77a" stroke={OR} />
      <path d="M11 4h10M13 7h8M15 10h6M16 13h5" stroke={OR} />
    </>
  ),
  tabmaster: (
    <>
      <rect x="1.500" y="2" width="19" height="18" fill={BL} stroke="#2a4a6a" strokeWidth="1.400" />
      <rect x="3.500" y="4.500" width="15" height="3" stroke="#fff" />
      <rect x="3.500" y="9.500" width="15" height="8.500" stroke="#fff" />
    </>
  ),
}

type Tool = string | { i: string; on?: boolean; w?: number }

// d: caret, x: disabled caret, sN: separator, gN: empty gap
const row1: Tool[] = [
  'newdoc', 'd', 'open', 'd', 'save', 'd', 's10', 'pdf', 'print', 's8', 'cut', 'copy', 'paste', 'x', 's8', 'clone', 's7',
  'undo', 'd', 'redo', 'x', 's10', 'find', 'spell', 's8', 'grid', { i: 'layout', w: 35 }, 'g3', 'd', 'g1', 'master', 's8',
  'start', 'current', 's8', 'table', 'd', 'image', 'video', 'chart', 's8', { i: 'textbox', on: true }, 'omega', 'x',
  'fontwork', 'link', { i: 'shapes', on: true }, 'g6', 'newslide', 'd', 'g3', 'dup', 'del', 's8', 'slideprop', 'd',
]
const row2: Tool[] = [
  'select', 'zoom', 's8', 'linecolor', 'd', 'fillcolor', 'd', 's10', 'line', 'rect', 'ellipse', 's6', 'arrow', 'd', 'curve', 'd',
  'connector', 'd', 's8', 'diamond', 'd', 'smile', 'd', 'lr', 'd', 'flow', 'd', 'callout', 'd', 'star', 'd', 'cube', 'd', 's10',
  'rotate', 'align', 'd', 'arrange', 'd', 'distribute', 'd', 's8', 'shadow', 'crop', 'filter', 'x', 's8', 'points', 'glue', 'extrude',
]

const Tools = ({ items }: { items: Tool[] }) => (
  <>
    {items.map((t, n) => {
      if (typeof t !== 'string')
        return (
          <ToolBtn key={n} $on={t.on} $w={t.w}>
            <I>{icons[t.i]}</I>
          </ToolBtn>
        )
      if (t === 'd') return <Caret key={n} />
      if (t === 'x') return <Caret key={n} $off />
      if (/^s\d+$/.test(t)) return <Sep key={n} $w={Number(t.slice(1))} />
      if (/^g\d+$/.test(t)) return <Gap key={n} $w={Number(t.slice(1))} />
      return (
        <ToolBtn key={n}>
          <I>{icons[t]}</I>
        </ToolBtn>
      )
    })}
  </>
)

const P = ({ n, on, w }: { n: string; on?: boolean; w?: number }) => (
  <PBtn $on={on} $w={w}>
    <I>{icons[n]}</I>
  </PBtn>
)

const Section = ({ title, open }: { title: string; open?: boolean }) => (
  <SectionHead>
    {open ? <ArrowDown /> : <ArrowRight />}
    {title}
  </SectionHead>
)

const SpinBox = () => (
  <Spin>
    <SpinValue>0.00″</SpinValue>
    <SpinBtn $w={34} $off>
      <I s={16} v={16}>
        <path d="M1 8h14" stroke="#d8d8d6" strokeWidth="2" />
      </I>
    </SpinBtn>
    <SpinBtn $w={35}>
      <I s={16} v={16}>
        <path d="M1 8h14M8 1v14" stroke="#333" strokeWidth="1.600" />
      </I>
    </SpinBtn>
  </Spin>
)

const DocGlyph = ({ s = 20 }: { s?: number }) => (
  <I s={s} v={20}>
    <path d="M4 1.500h8l4 4v13H4z" fill="#fff" stroke="#b85410" strokeWidth="1.500" />
    <path d="M12 1.500l4 4h-4z" fill="#b85410" stroke="none" />
    <rect x="7" y="10" width="6" height="6" stroke="#b85410" />
    <path d="M7 13h6M10 10v6" stroke="#b85410" />
  </I>
)

const CircleIcon = ({ bg, children }: { bg: string; children?: React.ReactNode }) => (
  <I s={23} v={23}>
    <circle cx="11.500" cy="11.500" r="10.500" fill={bg} stroke="none" />
    {children}
  </I>
)

const Tux = ({ s = 22 }: { s?: number }) => (
  <I s={s} v={22}>
    <ellipse cx="11" cy="12" rx="7.500" ry="9" fill="#111" stroke="none" />
    <ellipse cx="11" cy="14" rx="5" ry="6" fill="#fff" stroke="none" />
    <path d="M7 10h8l-4 3z" fill="#f5b400" stroke="none" />
    <path d="M5 14c3 2 9 2 12 0l-1 3H6z" fill="#d32020" stroke="none" />
    <path d="M5 20h4v2H4zM13 20h4l1 2h-5z" fill="#f5b400" stroke="none" />
  </I>
)

const TrayTux = () => (
  <I s={20} v={22}>
    <ellipse cx="11" cy="11" rx="7" ry="10" fill="#111" stroke="none" />
    <ellipse cx="11" cy="14" rx="5.500" ry="6.500" fill="#ddd" stroke="none" />
    <circle cx="9" cy="6" r="1.300" fill="#ddd" stroke="none" />
    <circle cx="13" cy="6" r="1.300" fill="#ddd" stroke="none" />
    <path d="M4 20h5v2H4zM13 20h5v2h-5z" fill="#999" stroke="none" />
  </I>
)

const QemuLogo = ({ s = 28 }: { s?: number }) => (
  <I s={s} v={28}>
    <ellipse cx="13.500" cy="14" rx="13" ry="13.500" fill="#0a0a0a" stroke="none" />
    <path d="M24 25l4 3h-5l-3-3z" fill="#0a0a0a" stroke="none" />
    <path d="M16 2c-6 0-9 4-9 8 0 5 5 8 5 14 3-4 4-7 3-11 1-2 2-3 8-3-2-1-3-1-4-2l2-1c-2-3-3-5-5-5z" fill="#f36d12" stroke="none" />
    <path d="M17 5c3 0 6 3 6 6l3 3-3-1z" fill="#7a7a7a" stroke="none" />
  </I>
)

const SpeakerIcon = ({ c = '#ddd' }: { c?: string }) => (
  <I s={22} v={22}>
    <path d="M3 8h4l5-4v14l-5-4H3z" fill={c} stroke="none" />
    <path d="M14 8c1.500 2 1.500 4 0 6M16.500 6c2.500 3 2.500 7 0 10M19 4c3.500 4 3.500 10 0 14" stroke={c} />
  </I>
)

export default function App() {
  return (
    <Screen>
      <GlobalStyle />
      <HostBar>
        <Launcher $w={36}>
          <CircleIcon bg="#3a4256">
            <circle cx="8" cy="8" r="3" fill="#fff" stroke="none" />
            <circle cx="15" cy="11" r="2.500" fill="#fff" stroke="none" />
            <circle cx="9" cy="16" r="2.500" fill="#fff" stroke="none" />
          </CircleIcon>
        </Launcher>
        <Launcher $w={36}>
          <CircleIcon bg="#555">
            <path d="M7 8l4 3-4 3M12 15h5" stroke="#fff" strokeWidth="1.500" />
          </CircleIcon>
        </Launcher>
        <Launcher $w={49}>
          <CircleIcon bg="#dcd9c8">
            <rect x="6" y="5" width="11" height="6" rx="3" fill="#3fae5a" stroke="none" />
            <rect x="6" y="12" width="11" height="6" rx="3" fill="#e0584a" stroke="none" />
          </CircleIcon>
        </Launcher>
        <Task>
          <CircleIcon bg="#555">
            <path d="M7 8l4 3-4 3M12 15h5" stroke="#fff" strokeWidth="1.500" />
          </CircleIcon>
        </Task>
        <Task>
          <CircleIcon bg="#6b5fa8">
            <path d="M6 8h4l1 1.500h6V16H6z" fill="#f5c030" stroke="none" />
          </CircleIcon>
        </Task>
        <Task>
          <Tux />
        </Task>
        <Task>
          <CircleIcon bg="#2c2560">
            <circle cx="12" cy="12" r="6.500" fill="#f58a1f" stroke="none" />
            <circle cx="11" cy="13" r="3.500" fill="#7a3bc0" stroke="none" />
          </CircleIcon>
        </Task>
        <Task $on>
          <QemuLogo s={26} />
        </Task>
        <Task>
          <CircleIcon bg="#9a5fb0">
            <rect x="7" y="5" width="9" height="13" fill="#eee" stroke="none" />
            <path d="M9 8h5M9 11h5M9 14h5" stroke="#888" />
          </CircleIcon>
        </Task>
        <HostTray>
          <TraySlot $w={34}>
            <TrayTux />
          </TraySlot>
          <TraySlot $w={34}>
            <I s={20} v={20}>
              <rect x="4" y="3" width="12" height="16" rx="2" stroke="#ddd" />
              <rect x="7" y="1" width="6" height="3" fill="#ddd" stroke="none" />
              <path d="M7 10h6M7 13h6" stroke="#ddd" />
            </I>
          </TraySlot>
          <TraySlot $w={34}>zh</TraySlot>
          <TraySlot $w={34}>
            <SpeakerIcon />
          </TraySlot>
          <TraySlot $w={34}>
            <I s={24} v={24}>
              <rect x="2" y="7" width="19" height="11" rx="2" stroke="#ddd" />
              <path d="M21 11v3" stroke="#ddd" />
              <rect x="4" y="9" width="9" height="7" fill="#ddd" stroke="none" />
              <path d="M11 8l-3 5h3l-2 4 5-6h-3l2-3z" fill="#3fae3f" stroke="none" />
            </I>
          </TraySlot>
          <TraySlot $w={34}>
            <I s={20} v={20}>
              <path d="M5 6l10 8-5 5V1l5 5-10 8" stroke="#bbb" />
            </I>
          </TraySlot>
          <TraySlot $w={34}>
            <I s={20} v={20}>
              <path d="M5 2h10l2 14v3H3v-3z M3 15h14" stroke="#ddd" />
            </I>
          </TraySlot>
          <TraySlot $w={34}>
            <I s={22} v={22}>
              <path d="M2 8c5-5 13-5 18 0M5 11c3.500-3 8.500-3 12 0M8 14c2-1.500 4-1.500 6 0" stroke="#888" />
              <circle cx="11" cy="17" r="1.500" fill="#ddd" stroke="none" />
            </I>
          </TraySlot>
          <TraySlot $w={28}>
            <I s={12} v={12}>
              <path d="M0 2h12L6 9z" fill="#ddd" stroke="none" />
            </I>
          </TraySlot>
          <HostDate>2022-10-10</HostDate>
          <HostTime>16:21:21</HostTime>
          <HostZone>(CST)</HostZone>
          <TraySlot $w={24}>
            <I s={20} v={20}>
              <rect x="1.500" y="1.500" width="17" height="17" rx="3" stroke="#ddd" />
              <path d="M6 13.500h8" stroke="#ddd" />
            </I>
          </TraySlot>
          <Gap $w={13} />
        </HostTray>
      </HostBar>

      <Qemu>
        <QemuTitleRow>
          <QemuLogo />
          <QemuTitle>QEMU - Press Ctrl-Alt-G to exit grab</QemuTitle>
          <QemuControls>
            <I s={20} v={20}>
              <path d="M3 6l7 8 7-8" stroke="#ccc" strokeWidth="1.400" />
            </I>
            <I s={20} v={20}>
              <path d="M3 14l7-8 7 8" stroke="#ccc" strokeWidth="1.400" />
            </I>
            <I s={20} v={20}>
              <path d="M4 4l12 12M16 4L4 16" stroke="#ccc" strokeWidth="1.400" />
            </I>
          </QemuControls>
        </QemuTitleRow>
        <PanelRow>
          <PanelApps>
            <I s={15} v={15}>
              <path d="M2 2l11 11M13 2L2 13" stroke="#1f9fd8" strokeWidth="3.500" />
            </I>
            Applications
          </PanelApps>
          <PanelTask>
            <DocGlyph />
            Untitled 2 - Libre…
          </PanelTask>
          <Pager>
            <PagerCell>
              <DocGlyph />
            </PagerCell>
            <PagerCell $on>
              <DocGlyph />
            </PagerCell>
          </Pager>
          <SpeakerIcon c="#eee" />
          <Gap $w={5} />
          <I s={22} v={22}>
            <path d="M13 1L7 10h4l-2 6 7-8h-4l3-7z" fill="#f5c518" stroke="#b98a10" />
            <path d="M7 14h8v4H7zM8 18v4M14 18v4" stroke="#ccc" />
          </I>
          <PanelClock>Mon 10 Oct, 16:21</PanelClock>
          <PanelUser>openeuler</PanelUser>
        </PanelRow>
      </Qemu>

      <Desktop>
        <DesktopLabel $left={26} $top={77}>
          File
        </DesktopLabel>
        <DesktopLabel $left={26} $top={191}>
          File
        </DesktopLabel>
        <DesktopLabel $left={47} $top={306}>
          H
        </DesktopLabel>
        <Window>
          <TitleBar>
            <DocGlyph s={22} />
            <TitleText>Untitled 2 - LibreOffice Impress</TitleText>
            <WinControls>
              <I s={15} v={15}>
                <path d="M3 10l4.500-5 4.500 5" stroke="#2e3436" strokeWidth="2" />
              </I>
              <I s={15} v={15}>
                <path d="M3 12h9" stroke="#2e3436" strokeWidth="2" />
              </I>
              <I s={15} v={15}>
                <rect x="3" y="3" width="9" height="9" stroke="#2e3436" strokeWidth="2" />
              </I>
              <I s={15} v={15}>
                <path d="M3 3l9 9M12 3l-9 9" stroke="#2e3436" strokeWidth="2" />
              </I>
            </WinControls>
          </TitleBar>
          <MenuBar>
            {['File', 'Edit', 'View', 'Insert', 'Format', 'Slide', 'Slide Show', 'Tools', 'Window', 'Help'].map((m) => (
              <span key={m}>{m}</span>
            ))}
          </MenuBar>
          <ToolRow $h={39} $left={5}>
            <Tools items={row1} />
          </ToolRow>
          <ToolRow $h={40} $left={6}>
            <Tools items={row2} />
          </ToolRow>
          <Popover />
          <Main>
            <SlidesPane>
              <PaneHead>
                Slides
                <I s={14} v={14}>
                  <path d="M3 3l8 8M11 3l-8 8" stroke="#444" />
                </I>
              </PaneHead>
              <SlideList>
                <Thumb>
                  <ThumbNo>1</ThumbNo>
                  <ThumbPage>Hello World!</ThumbPage>
                </Thumb>
              </SlideList>
            </SlidesPane>
            <Editor>
              <EditorRow>
                <Workspace>
                  <Slide>
                    <TitleFrame>Hello World!</TitleFrame>
                    <Outline>Click to add Text</Outline>
                    <CornerMark />
                    <Handle $x={52.5} $y={20} />
                    <Handle $x={511} $y={20} />
                    <Handle $x={969} $y={20} />
                    <Handle $x={52.5} $y={68} />
                    <Handle $x={969} $y={68} />
                    <Handle $x={52.5} $y={115} />
                    <Handle $x={511} $y={115} />
                    <Handle $x={969} $y={115} />
                    <Overlay $x={505} $y={61} width="12" height="14" viewBox="0 0 12 14">
                      <path d="M6 0v14M1 7h10" stroke="#e03b3b" strokeWidth="1" />
                    </Overlay>
                    <Overlay $x={308} $y={8} width="20" height="20" viewBox="0 0 18 18">
                      <path d="M9 0l3.500 3.500H10.300V7.700h4.200V5.500L18 9l-3.500 3.500v-2.200h-4.200v4.200h2.200L9 18l-3.500-3.500h2.200v-4.200H3.500v2.200L0 9l3.500-3.500v2.200h4.200V3.500H5.500z" fill="#111" stroke="#fff" strokeWidth="0.600" />
                    </Overlay>
                  </Slide>
                </Workspace>
                <VScroll>
                  <VThumb />
                </VScroll>
              </EditorRow>
              <HScrollRow>
                <HTrack>
                  <HThumb />
                </HTrack>
                <HCorner />
              </HScrollRow>
              <Grip $x={-2} $left />
              <Grip $x={1075} />
            </Editor>
            <Deck>
              <Panel>
                <PanelHead>
                  <I s={6} v={6}>
                    <path d="M3 -5v2M3 -1v2M3 3v2M3 7v2" stroke="#333" strokeWidth="2" />
                  </I>
                  Properties
                  <PanelClose>
                    <I s={14} v={14}>
                      <path d="M3 3l8 8M11 3l-8 8" stroke="#222" strokeWidth="1.800" />
                    </I>
                  </PanelClose>
                </PanelHead>
                <Section title="Character" open />
                <ComboRow>
                  <Combo $w={306} $btn={35}>
                    <span>Liberation Sans</span>
                    <b>
                      <PCaret />
                    </b>
                  </Combo>
                  <Combo $w={120} $btn={37}>
                    <span>44 pt</span>
                    <b>
                      <PCaret />
                    </b>
                  </Combo>
                </ComboRow>
                <PRow $top={10}>
                  <P n="bold" />
                  <P n="italic" />
                  <P n="under" />
                  <PCaret />
                  <P n="strike" />
                  <P n="shadowS" />
                  <Gap $w={162} />
                  <P n="grow" />
                  <P n="shrink" />
                </PRow>
                <PRow $top={9} $bottom={10}>
                  <P n="fontcolor" />
                  <PCaret />
                  <Gap $w={12} />
                  <P n="hilite" />
                  <PCaret />
                  <Gap $w={13} />
                  <P n="clearfmt" />
                  <Gap $w={125} />
                  <P n="sup" />
                  <P n="sub" />
                  <Gap $w={13} />
                  <P n="kern" />
                </PRow>
                <Section title="Lists" />
                <Section title="Paragraph" open />
                <PRow $h={34} $top={10}>
                  <P n="aleft" />
                  <P n="acenter" on />
                  <P n="aright" />
                  <P n="ajust" />
                  <Gap $w={181} />
                  <P n="vtop" />
                  <P n="vmid" on />
                  <P n="vbot" />
                </PRow>
                <Divider />
                <LabelRow>
                  <FieldLabel $w={233} $left={6}>
                    Spacing:
                  </FieldLabel>
                  <span>Indent:</span>
                </LabelRow>
                <PRow $h={34} $top={2}>
                  <P n="incsp" />
                  <P n="decsp" />
                  <Gap $w={153} />
                  <P n="indmore" />
                  <P n="indless" />
                  <P n="indmore" />
                </PRow>
                <SpinGrid>
                  <PRow $h={42} $left={1}>
                    <P n="above" />
                    <SpinBox />
                    <P n="befor" />
                    <SpinBox />
                  </PRow>
                  <PRow $h={42} $left={1}>
                    <P n="below" />
                    <SpinBox />
                    <P n="after" />
                    <SpinBox />
                  </PRow>
                  <PRow $h={42}>
                    <P n="linesp" />
                    <PCaret />
                    <Gap $w={162} />
                    <P n="first" />
                    <SpinBox />
                  </PRow>
                </SpinGrid>
                {['Area', 'Line', 'Shadow', 'Position and Size', 'Columns'].map((s) => (
                  <Section key={s} title={s} />
                ))}
              </Panel>
              <TabBar>
                <I s={22} v={22}>
                  <path d="M3 5h16M3 11h16M3 17h16" stroke="#222" strokeWidth="2" />
                </I>
                <Gap $h={16} />
                {['tabprops', 'tabstyles', 'tabgallery', 'tabnav', 'tabshapes', 'tabanim', 'tabfave', 'tabmaster'].map((t, n) => (
                  <Tab key={t} $on={n === 0}>
                    <I>{icons[t]}</I>
                  </Tab>
                ))}
              </TabBar>
            </Deck>
          </Main>
          <StatusBar>
            <Cell $w={102} $pad={11}>
              Slide 1 of 1
            </Cell>
            <Cell $w={560} $pad={9}>
              Title text 'Hello Wo...' selected
            </Cell>
            <Cell $w={258} $pad={9}>
              Default
            </Cell>
            <Cell $w={160} $pad={5}>
              <I s={20} v={20}>
                <path d="M5 1v7M1.500 4.500h7" stroke={BL} />
                <rect x="6" y="6" width="12" height="9" stroke={DK} />
              </I>
              0.58 / 0.21
            </Cell>
            <Cell $w={144}>
              <I s={20} v={20}>
                <rect x="5" y="3" width="11" height="9" stroke={DK} />
                <path d="M1 7v9M5 3v14M1 12h5" stroke={BL} />
              </I>
              9.92 x 1.04
            </Cell>
            <Cell $w={24} $center>
              <I s={14} v={14}>
                <rect x="2.500" y="1.500" width="9" height="11" stroke="#d02020" />
                <rect x="4.500" y="8" width="5" height="4.500" stroke="#d02020" />
                <rect x="4.500" y="1.500" width="5" height="3" stroke="#d02020" />
              </I>
            </Cell>
            <Cell $w={30} />
            <Cell $w={307} $center>
              English (USA)
            </Cell>
            <Cell $w={23} $center>
              <I s={18} v={18}>
                <path d="M9 1v16M1 9h16M9 1L6.500 4h5zM9 17l-2.500-3h5zM1 9l3-2.500v5zM17 9l-3-2.500v5z" stroke={BL} />
              </I>
            </Cell>
            <Zoomer>
              <ZoomSign>−</ZoomSign>
              <ZoomTrack />
              <ZoomSign>+</ZoomSign>
            </Zoomer>
            <Cell $w={50} $pad={9} $last>
              77%
            </Cell>
          </StatusBar>
        </Window>
      </Desktop>

      <Behind>
        <BehindDoc>
          <BehindKey>F5 键</BehindKey>
          <span>查看幻灯片放映。</span>
        </BehindDoc>
        <BehindNav>
          <NavIcon>
            <I s={16} v={16}>
              <rect x="2" y="2" width="12" height="14" stroke="#2a60c0" />
              <path d="M2 9h12M8 2v14" stroke="#2a60c0" />
            </I>
          </NavIcon>
          <NavLine>
            <span>图表与图示</span>
            <span>安与脚本</span>
          </NavLine>
        </BehindNav>
      </Behind>
      <WindowEdge />
    </Screen>
  )
}
